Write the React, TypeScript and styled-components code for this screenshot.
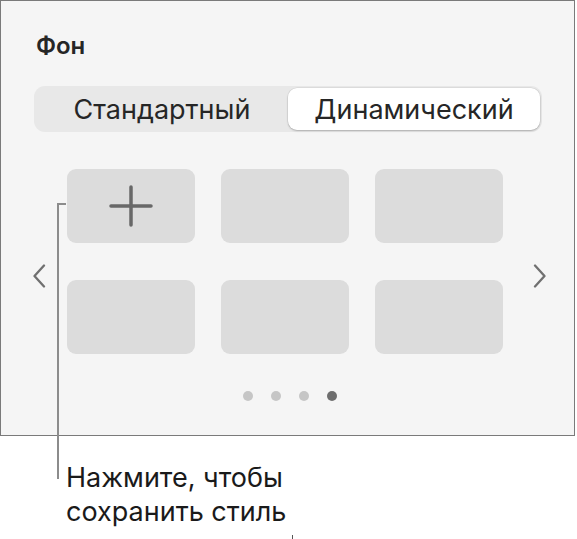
import React from "react";
import styled, { createGlobalStyle } from "styled-components";

const Global = createGlobalStyle`
  html, body { margin: 0; padding: 0; background: #ffffff; }
  body { font-family: Inter, "Noto Sans", sans-serif; color: #1f1f1f; }
`;

const Page = styled.div`
  position: relative;
  width: 577px;
  height: 539px;
  overflow: hidden;
`;

const Panel = styled.section`
  box-sizing: border-box;
  width: 575px;
  height: 436px;
  background: #f5f5f5;
  border: 1px solid #7a7a7a;
  padding: 31px 0 0 35px;
  display: flex;
  flex-direction: column;
`;

const Title = styled.h2`
  margin: 0;
  font-size: 24px;
  font-weight: 600;
  line-height: 28px;
  color: #262626;
`;

const Segmented = styled.div`
  margin-top: 26px;
  margin-left: -2px;
  box-sizing: border-box;
  width: 508px;
  height: 46px;
  padding: 2px;
  border-radius: 11px;
  background: #e8e8e8;
  display: grid;
  grid-template-columns: 1fr 1fr;
`;

const Segment = styled.div<{ $active?: boolean }>`
  display: flex;
  align-items: center;
  justify-content: center;
  border-radius: 9px;
  font-size: 27px;
  color: #262626;
  background: ${(p) => (p.$active ? "#ffffff" : "transparent")};
  box-shadow: ${(p) =>
    p.$active ? "0 1px 2px rgba(0,0,0,0.22), 0 0 0 0.5px rgba(0,0,0,0.08)" : "none"};
`;

const Carousel = styled.div`
  margin-top: 37px;
  margin-left: -4px;
  display: flex;
  align-items: flex-start;
`;

const Chevron = styled.div<{ $side: "left" | "right" }>`
  flex: 0 0 14px;
  width: 14px;
  height: 24px;
  margin-top: 95px;
  margin-left: ${(p) => (p.$side === "right" ? "30px" : "0")};
  margin-right: ${(p) => (p.$side === "left" ? "21px" : "0")};
  display: flex;
  color: #707070;

  svg {
    flex-shrink: 0;
  }
`;

const Grid = styled.div`
  flex: 0 0 auto;
  display: grid;
  grid-template-columns: repeat(3, 128px);
  grid-auto-rows: 74px;
  column-gap: 26px;
  row-gap: 37px;
`;

const Tile = styled.div`
  border-radius: 9px;
  background: #dcdcdc;
  display: flex;
  align-items: center;
  justify-content: center;
`;

const Dots = styled.div`
  margin-top: 37px;
  margin-left: 207px;
  display: flex;
  gap: 18px;
`;

const Dot = styled.span<{ $active?: boolean }>`
  width: 10px;
  height: 10px;
  border-radius: 50%;
  background: ${(p) => (p.$active ? "#6e6e6e" : "#c6c6c6")};
`;

const Leader = styled.div`
  position: absolute;
  left: 57px;
  top: 203px;
  width: 9px;
  height: 276px;
  border-left: 2px solid #8c8c8c;
  border-top: 2px solid #8c8c8c;
  box-sizing: border-box;
`;

const Caption = styled.p`
  margin: 25px 0 0 66px;
  font-size: 27px;
  line-height: 34px;
  color: #1a1a1a;
`;

const Tick = styled.div`
  position: absolute;
  left: 292px;
  top: 535px;
  width: 1px;
  height: 4px;
  background: #555;
`;

const ChevronLeft = () => (
  <svg width="14" height="24" viewBox="0 0 14 24" fill="none">
    <path d="M12 1.5 L2.5 12 L12 22.5" stroke="currentColor" strokeWidth="2.3" strokeLinecap="round" strokeLinejoin="round" />
  </svg>
);

const ChevronRight = () => (
  <svg width="14" height="24" viewBox="0 0 14 24" fill="none">
    <path d="M2 1.5 L11.5 12 L2 22.5" stroke="currentColor" strokeWidth="2.3" strokeLinecap="round" strokeLinejoin="round" />
  </svg>
);

const Plus = () => (
  <svg width="44" height="42" viewBox="0 0 44 42" fill="none">
    <path d="M22 2 V40 M2 21 H42" stroke="#686868" strokeWidth="3.5" strokeLinecap="round" />
  </svg>
);

export default function App() {
  return (
    <Page>
      <Global />
      <Panel>
        <Title>Фон</Title>
        <Segmented>
          <Segment>Стандартный</Segment>
          <Segment $active>Динамический</Segment>
        </Segmented>
        <Carousel>
          <Chevron $side="left">
            <ChevronLeft />
          </Chevron>
          <Grid>
            <Tile>
              <Plus />
            </Tile>
            <Tile />
            <Tile />
            <Tile />
            <Tile />
            <Tile />
          </Grid>
          <Chevron $side="right">
            <ChevronRight />
          </Chevron>
        </Carousel>
        <Dots>
          <Dot />
          <Dot />
          <Dot />
          <Dot $active />
        </Dots>
      </Panel>
      <Leader />
      <Caption>
        Нажмите, чтобы
        <br />
        сохранить стиль
      </Caption>
      <Tick />
    </Page>
  );
}
